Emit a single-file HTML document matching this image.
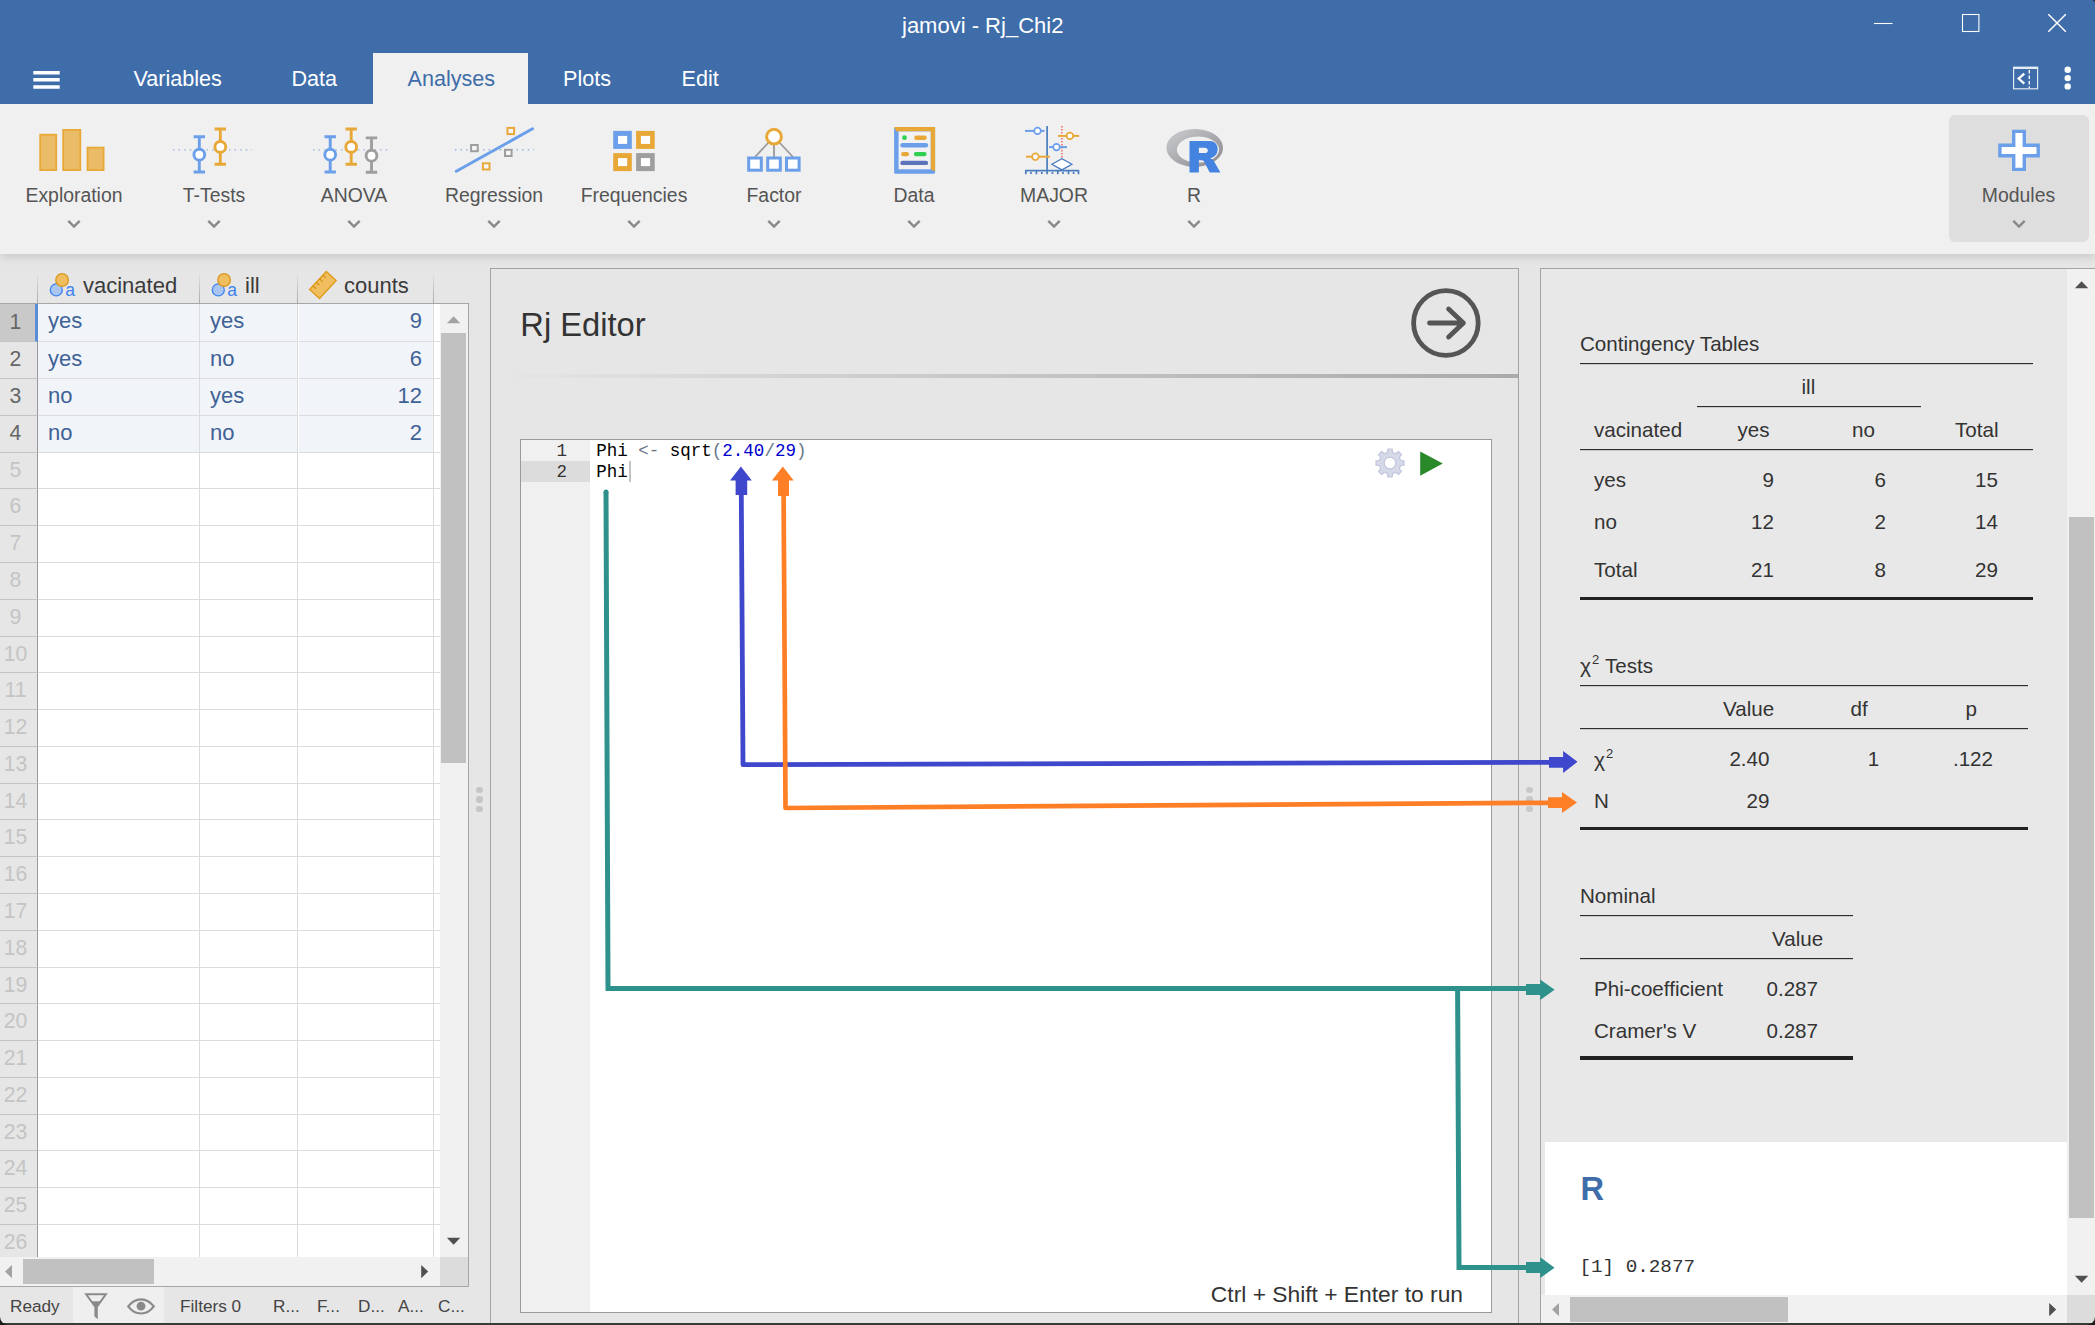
<!DOCTYPE html>
<html>
<head>
<meta charset="utf-8">
<title>jamovi - Rj_Chi2</title>
<style>
*{box-sizing:border-box;margin:0;padding:0}
html,body{width:2095px;height:1325px;overflow:hidden;background:#e6e6e6;font-family:"Liberation Sans",sans-serif;color:#333}
.a{position:absolute}
#app{position:relative;width:2095px;height:1325px;overflow:hidden;background:#e6e6e6}
.t{position:absolute;white-space:nowrap;line-height:1}
/* header */
#hdr{left:0;top:0;width:2095px;height:104px;background:#3e6da9}
#title{left:902px;top:15.08px;font-size:22px;color:#fff}
.tab{position:absolute;color:#fff;font-size:21.6px;white-space:nowrap;line-height:1}
#tab-an{left:373px;top:53px;width:155px;height:51px;background:#f0f0f0}
/* ribbon */
#ribbon{left:0;top:104px;width:2095px;height:150px;background:#f0f0f0;box-shadow:0 3px 9px rgba(0,0,0,.135)}
.lbl{position:absolute;top:185.78px;width:200px;margin-left:-100px;font-size:19.4px;line-height:1;color:#555;white-space:nowrap;text-align:center}
/* data grid */
#grid{left:0;top:268px;width:469px;height:1019px;background:#fff;overflow:hidden}
.rh{position:absolute;left:0;width:38px;padding-right:6px;background:#e6e6e6;border-right:1px solid #999;border-bottom:1px solid #c4c4c4;color:#c4c4c4;font-size:21.2px;text-align:center;white-space:nowrap}
.rh.f{color:#666}
.cell{position:absolute;border-right:1px solid #dcdcdc;border-bottom:1px solid #dcdcdc;font-size:22px;color:#3f6296;white-space:nowrap}
.cell.s{background:#f1f5f9}
.ch{position:absolute;line-height:1;font-size:22px;color:#3a3a3a;white-space:nowrap}
.sb{background:#f1f1f1}
.th{background:#c1c1c1}
/* status */
#status{left:0;top:1287px;width:469px;height:36px;background:#e6e6e6;font-size:17.2px;color:#444}
#status .t{top:11.34px}
/* results */
.r{position:absolute;white-space:nowrap;line-height:1;font-size:20.6px;color:#333;margin-top:.5px}
.rule{position:absolute;height:1px;background:#2e2e2e;box-shadow:0 1px 0 rgba(60,60,60,.18)}
.rule.k{height:3.2px;background:#222;box-shadow:none}
</style>
</head>
<body>
<div id="app">
<!-- ===== data grid ===== -->
<div id="grid" class="a">
<div class="a" style="left:0;top:0;width:469px;height:35px;background:#e6e6e6"></div>
<div class="a" style="left:37px;top:4px;width:1px;height:31px;background:linear-gradient(rgba(160,160,160,0),#a8a8a8)"></div>
<div class="a" style="left:199px;top:4px;width:1px;height:31px;background:linear-gradient(rgba(160,160,160,0),#a8a8a8)"></div>
<div class="a" style="left:297px;top:4px;width:1px;height:31px;background:linear-gradient(rgba(160,160,160,0),#a8a8a8)"></div>
<div class="a" style="left:433px;top:4px;width:1px;height:31px;background:linear-gradient(rgba(160,160,160,0),#a8a8a8)"></div>
<div class="a" style="left:0;top:35px;width:469px;height:1px;background:#a6a6a6"></div>
<svg class="a" style="left:48px;top:3px" width="30" height="28" viewBox="0 0 30 28"><circle cx="8.3" cy="18.9" r="6" fill="#a9c5f1" stroke="#3d83ef" stroke-width="1.3"/><circle cx="14.1" cy="9" r="6.3" fill="#f0bd5f" stroke="#d9981f" stroke-width="1.3"/><text x="17.2" y="24.6" font-family="Liberation Sans" font-size="17.5" fill="#3d83ef">a</text></svg>
<div class="ch" style="left:83px;top:7.28px">vacinated</div>
<svg class="a" style="left:209.8px;top:3px" width="30" height="28" viewBox="0 0 30 28"><circle cx="8.3" cy="18.9" r="6" fill="#a9c5f1" stroke="#3d83ef" stroke-width="1.3"/><circle cx="14.1" cy="9" r="6.3" fill="#f0bd5f" stroke="#d9981f" stroke-width="1.3"/><text x="17.2" y="24.6" font-family="Liberation Sans" font-size="17.5" fill="#3d83ef">a</text></svg>
<div class="ch" style="left:245px;top:7.28px">ill</div>
<svg class="a" style="left:306px;top:0" width="34" height="34" viewBox="0 0 34 34"><g transform="translate(16.9,17) rotate(-47.5)"><rect x="-12.3" y="-6.7" width="24.6" height="13.4" fill="#f0bd5f" stroke="#e09c18" stroke-width="1.4"/><path d="M-7.4 -6.7v4.2M-2.5 -6.7v4.2M2.4 -6.7v4.2M7.3 -6.7v4.2" stroke="#d08c10" stroke-width="1.1" fill="none"/></g></svg>
<div class="ch" style="left:344px;top:7.28px">counts</div>
<div class="rh f" style="top:36px;height:38px;line-height:35px;background:#c9c9c9;border-right:3px solid #5b8dd6;padding-right:4px">1</div><div class="cell s" style="left:38px;top:36px;width:162px;height:38px;line-height:34px;padding-left:10px">yes</div><div class="cell s" style="left:200px;top:36px;width:98px;height:38px;line-height:34px;padding-left:10px">yes</div><div class="cell s" style="left:299px;top:36px;width:135px;height:38px;line-height:34px;text-align:right;padding-right:11px">9</div><div class="a" style="left:434px;top:73px;width:6px;height:1px;background:#dcdcdc"></div>
<div class="rh f" style="top:74px;height:37px;line-height:34px">2</div><div class="cell s" style="left:38px;top:74px;width:162px;height:37px;line-height:33px;padding-left:10px">yes</div><div class="cell s" style="left:200px;top:74px;width:98px;height:37px;line-height:33px;padding-left:10px">no</div><div class="cell s" style="left:299px;top:74px;width:135px;height:37px;line-height:33px;text-align:right;padding-right:11px">6</div><div class="a" style="left:434px;top:110px;width:6px;height:1px;background:#dcdcdc"></div>
<div class="rh f" style="top:111px;height:37px;line-height:34px">3</div><div class="cell s" style="left:38px;top:111px;width:162px;height:37px;line-height:33px;padding-left:10px">no</div><div class="cell s" style="left:200px;top:111px;width:98px;height:37px;line-height:33px;padding-left:10px">yes</div><div class="cell s" style="left:299px;top:111px;width:135px;height:37px;line-height:33px;text-align:right;padding-right:11px">12</div><div class="a" style="left:434px;top:147px;width:6px;height:1px;background:#dcdcdc"></div>
<div class="rh f" style="top:148px;height:37px;line-height:34px">4</div><div class="cell s" style="left:38px;top:148px;width:162px;height:37px;line-height:33px;padding-left:10px">no</div><div class="cell s" style="left:200px;top:148px;width:98px;height:37px;line-height:33px;padding-left:10px">no</div><div class="cell s" style="left:299px;top:148px;width:135px;height:37px;line-height:33px;text-align:right;padding-right:11px">2</div><div class="a" style="left:434px;top:184px;width:6px;height:1px;background:#dcdcdc"></div>
<div class="rh" style="top:185px;height:36px;line-height:33px">5</div><div class="cell" style="left:38px;top:185px;width:162px;height:36px;line-height:32px;padding-left:10px"></div><div class="cell" style="left:200px;top:185px;width:98px;height:36px;line-height:32px;padding-left:10px"></div><div class="cell" style="left:298px;top:185px;width:136px;height:36px;line-height:32px;text-align:right;padding-right:11px"></div><div class="a" style="left:434px;top:220px;width:6px;height:1px;background:#dcdcdc"></div>
<div class="rh" style="top:221px;height:37px;line-height:34px">6</div><div class="cell" style="left:38px;top:221px;width:162px;height:37px;line-height:33px;padding-left:10px"></div><div class="cell" style="left:200px;top:221px;width:98px;height:37px;line-height:33px;padding-left:10px"></div><div class="cell" style="left:298px;top:221px;width:136px;height:37px;line-height:33px;text-align:right;padding-right:11px"></div><div class="a" style="left:434px;top:257px;width:6px;height:1px;background:#dcdcdc"></div>
<div class="rh" style="top:258px;height:37px;line-height:34px">7</div><div class="cell" style="left:38px;top:258px;width:162px;height:37px;line-height:33px;padding-left:10px"></div><div class="cell" style="left:200px;top:258px;width:98px;height:37px;line-height:33px;padding-left:10px"></div><div class="cell" style="left:298px;top:258px;width:136px;height:37px;line-height:33px;text-align:right;padding-right:11px"></div><div class="a" style="left:434px;top:294px;width:6px;height:1px;background:#dcdcdc"></div>
<div class="rh" style="top:295px;height:37px;line-height:34px">8</div><div class="cell" style="left:38px;top:295px;width:162px;height:37px;line-height:33px;padding-left:10px"></div><div class="cell" style="left:200px;top:295px;width:98px;height:37px;line-height:33px;padding-left:10px"></div><div class="cell" style="left:298px;top:295px;width:136px;height:37px;line-height:33px;text-align:right;padding-right:11px"></div><div class="a" style="left:434px;top:331px;width:6px;height:1px;background:#dcdcdc"></div>
<div class="rh" style="top:332px;height:37px;line-height:34px">9</div><div class="cell" style="left:38px;top:332px;width:162px;height:37px;line-height:33px;padding-left:10px"></div><div class="cell" style="left:200px;top:332px;width:98px;height:37px;line-height:33px;padding-left:10px"></div><div class="cell" style="left:298px;top:332px;width:136px;height:37px;line-height:33px;text-align:right;padding-right:11px"></div><div class="a" style="left:434px;top:368px;width:6px;height:1px;background:#dcdcdc"></div>
<div class="rh" style="top:369px;height:36px;line-height:33px">10</div><div class="cell" style="left:38px;top:369px;width:162px;height:36px;line-height:32px;padding-left:10px"></div><div class="cell" style="left:200px;top:369px;width:98px;height:36px;line-height:32px;padding-left:10px"></div><div class="cell" style="left:298px;top:369px;width:136px;height:36px;line-height:32px;text-align:right;padding-right:11px"></div><div class="a" style="left:434px;top:404px;width:6px;height:1px;background:#dcdcdc"></div>
<div class="rh" style="top:405px;height:37px;line-height:34px">11</div><div class="cell" style="left:38px;top:405px;width:162px;height:37px;line-height:33px;padding-left:10px"></div><div class="cell" style="left:200px;top:405px;width:98px;height:37px;line-height:33px;padding-left:10px"></div><div class="cell" style="left:298px;top:405px;width:136px;height:37px;line-height:33px;text-align:right;padding-right:11px"></div><div class="a" style="left:434px;top:441px;width:6px;height:1px;background:#dcdcdc"></div>
<div class="rh" style="top:442px;height:37px;line-height:34px">12</div><div class="cell" style="left:38px;top:442px;width:162px;height:37px;line-height:33px;padding-left:10px"></div><div class="cell" style="left:200px;top:442px;width:98px;height:37px;line-height:33px;padding-left:10px"></div><div class="cell" style="left:298px;top:442px;width:136px;height:37px;line-height:33px;text-align:right;padding-right:11px"></div><div class="a" style="left:434px;top:478px;width:6px;height:1px;background:#dcdcdc"></div>
<div class="rh" style="top:479px;height:37px;line-height:34px">13</div><div class="cell" style="left:38px;top:479px;width:162px;height:37px;line-height:33px;padding-left:10px"></div><div class="cell" style="left:200px;top:479px;width:98px;height:37px;line-height:33px;padding-left:10px"></div><div class="cell" style="left:298px;top:479px;width:136px;height:37px;line-height:33px;text-align:right;padding-right:11px"></div><div class="a" style="left:434px;top:515px;width:6px;height:1px;background:#dcdcdc"></div>
<div class="rh" style="top:516px;height:36px;line-height:33px">14</div><div class="cell" style="left:38px;top:516px;width:162px;height:36px;line-height:32px;padding-left:10px"></div><div class="cell" style="left:200px;top:516px;width:98px;height:36px;line-height:32px;padding-left:10px"></div><div class="cell" style="left:298px;top:516px;width:136px;height:36px;line-height:32px;text-align:right;padding-right:11px"></div><div class="a" style="left:434px;top:551px;width:6px;height:1px;background:#dcdcdc"></div>
<div class="rh" style="top:552px;height:37px;line-height:34px">15</div><div class="cell" style="left:38px;top:552px;width:162px;height:37px;line-height:33px;padding-left:10px"></div><div class="cell" style="left:200px;top:552px;width:98px;height:37px;line-height:33px;padding-left:10px"></div><div class="cell" style="left:298px;top:552px;width:136px;height:37px;line-height:33px;text-align:right;padding-right:11px"></div><div class="a" style="left:434px;top:588px;width:6px;height:1px;background:#dcdcdc"></div>
<div class="rh" style="top:589px;height:37px;line-height:34px">16</div><div class="cell" style="left:38px;top:589px;width:162px;height:37px;line-height:33px;padding-left:10px"></div><div class="cell" style="left:200px;top:589px;width:98px;height:37px;line-height:33px;padding-left:10px"></div><div class="cell" style="left:298px;top:589px;width:136px;height:37px;line-height:33px;text-align:right;padding-right:11px"></div><div class="a" style="left:434px;top:625px;width:6px;height:1px;background:#dcdcdc"></div>
<div class="rh" style="top:626px;height:37px;line-height:34px">17</div><div class="cell" style="left:38px;top:626px;width:162px;height:37px;line-height:33px;padding-left:10px"></div><div class="cell" style="left:200px;top:626px;width:98px;height:37px;line-height:33px;padding-left:10px"></div><div class="cell" style="left:298px;top:626px;width:136px;height:37px;line-height:33px;text-align:right;padding-right:11px"></div><div class="a" style="left:434px;top:662px;width:6px;height:1px;background:#dcdcdc"></div>
<div class="rh" style="top:663px;height:37px;line-height:34px">18</div><div class="cell" style="left:38px;top:663px;width:162px;height:37px;line-height:33px;padding-left:10px"></div><div class="cell" style="left:200px;top:663px;width:98px;height:37px;line-height:33px;padding-left:10px"></div><div class="cell" style="left:298px;top:663px;width:136px;height:37px;line-height:33px;text-align:right;padding-right:11px"></div><div class="a" style="left:434px;top:699px;width:6px;height:1px;background:#dcdcdc"></div>
<div class="rh" style="top:700px;height:36px;line-height:33px">19</div><div class="cell" style="left:38px;top:700px;width:162px;height:36px;line-height:32px;padding-left:10px"></div><div class="cell" style="left:200px;top:700px;width:98px;height:36px;line-height:32px;padding-left:10px"></div><div class="cell" style="left:298px;top:700px;width:136px;height:36px;line-height:32px;text-align:right;padding-right:11px"></div><div class="a" style="left:434px;top:735px;width:6px;height:1px;background:#dcdcdc"></div>
<div class="rh" style="top:736px;height:37px;line-height:34px">20</div><div class="cell" style="left:38px;top:736px;width:162px;height:37px;line-height:33px;padding-left:10px"></div><div class="cell" style="left:200px;top:736px;width:98px;height:37px;line-height:33px;padding-left:10px"></div><div class="cell" style="left:298px;top:736px;width:136px;height:37px;line-height:33px;text-align:right;padding-right:11px"></div><div class="a" style="left:434px;top:772px;width:6px;height:1px;background:#dcdcdc"></div>
<div class="rh" style="top:773px;height:37px;line-height:34px">21</div><div class="cell" style="left:38px;top:773px;width:162px;height:37px;line-height:33px;padding-left:10px"></div><div class="cell" style="left:200px;top:773px;width:98px;height:37px;line-height:33px;padding-left:10px"></div><div class="cell" style="left:298px;top:773px;width:136px;height:37px;line-height:33px;text-align:right;padding-right:11px"></div><div class="a" style="left:434px;top:809px;width:6px;height:1px;background:#dcdcdc"></div>
<div class="rh" style="top:810px;height:37px;line-height:34px">22</div><div class="cell" style="left:38px;top:810px;width:162px;height:37px;line-height:33px;padding-left:10px"></div><div class="cell" style="left:200px;top:810px;width:98px;height:37px;line-height:33px;padding-left:10px"></div><div class="cell" style="left:298px;top:810px;width:136px;height:37px;line-height:33px;text-align:right;padding-right:11px"></div><div class="a" style="left:434px;top:846px;width:6px;height:1px;background:#dcdcdc"></div>
<div class="rh" style="top:847px;height:36px;line-height:33px">23</div><div class="cell" style="left:38px;top:847px;width:162px;height:36px;line-height:32px;padding-left:10px"></div><div class="cell" style="left:200px;top:847px;width:98px;height:36px;line-height:32px;padding-left:10px"></div><div class="cell" style="left:298px;top:847px;width:136px;height:36px;line-height:32px;text-align:right;padding-right:11px"></div><div class="a" style="left:434px;top:882px;width:6px;height:1px;background:#dcdcdc"></div>
<div class="rh" style="top:883px;height:37px;line-height:34px">24</div><div class="cell" style="left:38px;top:883px;width:162px;height:37px;line-height:33px;padding-left:10px"></div><div class="cell" style="left:200px;top:883px;width:98px;height:37px;line-height:33px;padding-left:10px"></div><div class="cell" style="left:298px;top:883px;width:136px;height:37px;line-height:33px;text-align:right;padding-right:11px"></div><div class="a" style="left:434px;top:919px;width:6px;height:1px;background:#dcdcdc"></div>
<div class="rh" style="top:920px;height:37px;line-height:34px">25</div><div class="cell" style="left:38px;top:920px;width:162px;height:37px;line-height:33px;padding-left:10px"></div><div class="cell" style="left:200px;top:920px;width:98px;height:37px;line-height:33px;padding-left:10px"></div><div class="cell" style="left:298px;top:920px;width:136px;height:37px;line-height:33px;text-align:right;padding-right:11px"></div><div class="a" style="left:434px;top:956px;width:6px;height:1px;background:#dcdcdc"></div>
<div class="rh" style="top:957px;height:37px;line-height:34px">26</div><div class="cell" style="left:38px;top:957px;width:162px;height:37px;line-height:33px;padding-left:10px"></div><div class="cell" style="left:200px;top:957px;width:98px;height:37px;line-height:33px;padding-left:10px"></div><div class="cell" style="left:298px;top:957px;width:136px;height:37px;line-height:33px;text-align:right;padding-right:11px"></div><div class="a" style="left:434px;top:993px;width:6px;height:1px;background:#dcdcdc"></div>
<div class="a sb" style="left:440px;top:36px;width:28px;height:953px"></div>
<div class="a" style="left:468px;top:35px;width:1px;height:984px;background:#a6a6a6"></div>
<div class="a th" style="left:441px;top:65px;width:25px;height:430px"></div>
<svg class="a" style="left:446px;top:47px" width="16" height="9" viewBox="0 0 16 9"><path d="M0.9 8.2L7.6 1.2L14.3 8.2z" fill="#a3a3a3"/></svg>
<svg class="a" style="left:446px;top:969px" width="16" height="9" viewBox="0 0 16 9"><path d="M0.9 0.8L7.6 7.8L14.3 0.8z" fill="#505050"/></svg>
<div class="a sb" style="left:0;top:989px;width:440px;height:29px"></div>
<div class="a" style="left:440px;top:989px;width:28px;height:29px;background:#dcdcdc"></div>
<div class="a th" style="left:23px;top:991px;width:131px;height:25px"></div>
<svg class="a" style="left:4px;top:996px" width="9" height="16" viewBox="0 0 9 16"><path d="M8 1L1 7.6L8 14.2z" fill="#a3a3a3"/></svg>
<svg class="a" style="left:420px;top:996px" width="9" height="16" viewBox="0 0 9 16"><path d="M1.2 1L8.2 7.6L1.2 14.2z" fill="#505050"/></svg>
<div class="a" style="left:0;top:1018px;width:469px;height:1px;background:#a6a6a6"></div>
</div>
<!-- ===== status bar ===== -->
<div id="status" class="a">
<div class="a" style="left:73px;top:0;width:91px;height:36px;background:#efefef"></div>
<div class="t" style="left:10px">Ready</div>
<svg class="a" style="left:83px;top:5px" width="27" height="29" viewBox="0 0 27 29"><path d="M1.2 1.2H24.8L14.8 15.2V27.2L11.4 24.6V15.2z" fill="#8a8a8a"/><path d="M5 3.2H21L16.6 9.2H9.4z" fill="#efefef"/></svg>
<svg class="a" style="left:127px;top:11px" width="28" height="17" viewBox="0 0 28 17"><path d="M1.2 8.4C5 3.2 9 1.3 14 1.3S23 3.2 26.8 8.4C23 13.6 19 15.5 14 15.5S5 13.6 1.2 8.4z" fill="none" stroke="#8a8a8a" stroke-width="2.2"/><circle cx="14" cy="8.2" r="4.4" fill="#8a8a8a"/></svg>
<div class="t" style="left:180px">Filters 0</div>
<div class="t" style="left:273px">R...</div>
<div class="t" style="left:317px">F...</div>
<div class="t" style="left:358px">D...</div>
<div class="t" style="left:398px">A...</div>
<div class="t" style="left:438px">C...</div>
</div>
<div class="a" style="left:469px;top:268px;width:21px;height:1057px;background:#e6e6e6"></div>
<div class="a" style="left:476.2px;top:786.7px;width:6.6px;height:6.6px;border-radius:3.3px;background:#c6c6c6"></div><div class="a" style="left:476.2px;top:796.2px;width:6.6px;height:6.6px;border-radius:3.3px;background:#c6c6c6"></div><div class="a" style="left:476.2px;top:805.7px;width:6.6px;height:6.6px;border-radius:3.3px;background:#c6c6c6"></div>
<!-- ===== Rj editor ===== -->
<div class="a" style="left:490px;top:268px;width:1029px;height:1060px;background:#e6e6e6;border:1px solid #a4a4a4"></div>
<div class="t" style="left:520.3px;top:309.35px;font-size:32.7px;color:#333">Rj Editor</div>
<svg class="a" style="left:1408px;top:285px" width="76" height="76" viewBox="0 0 76 76"><circle cx="37.9" cy="38" r="32.3" fill="none" stroke="#555" stroke-width="4.8"/><path d="M21.5 38H55.3M40.6 24L55.4 38L40.6 52" fill="none" stroke="#555" stroke-width="4.8" stroke-linecap="round" stroke-linejoin="round"/></svg>
<div class="a" style="left:500px;top:374px;width:1018px;height:4px;background:linear-gradient(90deg,rgba(170,170,170,0),rgba(170,170,170,.35) 30%,#aaa 100%)"></div>
<div class="a" style="left:520px;top:439px;width:972px;height:874px;background:#fff;border:1px solid #9a9a9a"></div>
<div class="a" style="left:521px;top:440px;width:69px;height:872px;background:#f0f0f0"></div>
<div class="a" style="left:521px;top:461px;width:69px;height:21px;background:#dcdcdc"></div>
<div class="a" style="left:521px;top:441.4px;width:46px;text-align:right;color:#333;font-family:'Liberation Mono',monospace;font-size:17.5px;line-height:21px;white-space:pre">1
2</div>
<div class="a" style="left:596.3px;top:441.4px;color:#000;font-family:'Liberation Mono',monospace;font-size:17.5px;line-height:21px;white-space:pre">Phi <span style="color:#687687">&lt;-</span> sqrt<span style="color:#687687">(</span><span style="color:#0000cd">2.40</span><span style="color:#687687">/</span><span style="color:#0000cd">29</span><span style="color:#687687">)</span>
Phi</div>
<div class="a" style="left:628.5px;top:461px;width:2px;height:21px;background:#c4c4c4"></div>
<svg class="a" style="left:1373.5px;top:447.2px" width="32" height="32" viewBox="0 0 32 32"><path d="M30.0 13.8L30.0 18.2L26.6 18.5L25.3 21.7L27.5 24.3L24.3 27.5L21.7 25.3L18.5 26.6L18.2 30.0L13.8 30.0L13.5 26.6L10.3 25.3L7.7 27.5L4.5 24.3L6.7 21.7L5.4 18.5L2.0 18.2L2.0 13.8L5.4 13.5L6.7 10.3L4.5 7.7L7.7 4.5L10.3 6.7L13.5 5.4L13.8 2.0L18.2 2.0L18.5 5.4L21.7 6.7L24.3 4.5L27.5 7.7L25.3 10.3L26.6 13.5z" fill="#d6d9e8" stroke="#c3c6dd" stroke-width="1.2" stroke-linejoin="round"/><circle cx="16" cy="16" r="5.8" fill="#fff" stroke="#c3c6dd" stroke-width="1.2"/></svg>
<svg class="a" style="left:1419px;top:450px" width="26" height="28" viewBox="0 0 26 28"><path d="M1.2 1.4L23.8 13.5L1.2 25.7z" fill="#2a8a2a"/></svg>
<div class="t" style="left:1100px;width:363px;text-align:right;top:1283.0px;font-size:22.8px;color:#333">Ctrl + Shift + Enter to run</div>
<div class="a" style="left:1526.4px;top:786.7px;width:6.6px;height:6.6px;border-radius:3.3px;background:#c8c8c8"></div><div class="a" style="left:1526.4px;top:796.2px;width:6.6px;height:6.6px;border-radius:3.3px;background:#c8c8c8"></div><div class="a" style="left:1526.4px;top:805.7px;width:6.6px;height:6.6px;border-radius:3.3px;background:#c8c8c8"></div>
<!-- ===== results ===== -->
<div class="a" style="left:1540px;top:268px;width:560px;height:1060px;background:#e8e8e8;border:1px solid #a4a4a4"></div>
<div class="r" style="left:1580px;top:333.4px">Contingency Tables</div>
<div class="rule" style="left:1580px;top:363px;width:453px"></div>
<div class="r" style="left:1801.5px;top:376.4px">ill</div>
<div class="rule" style="left:1697px;top:406px;width:224px"></div>
<div class="r" style="left:1594px;top:419.3px">vacinated</div>
<div class="r" style="left:1737.5px;top:419.3px">yes</div>
<div class="r" style="left:1852px;top:419.3px">no</div>
<div class="r" style="left:1955px;top:419.3px">Total</div>
<div class="rule" style="left:1580px;top:449px;width:453px"></div>
<div class="r" style="left:1594px;top:469.0px">yes</div><div class="r" style="left:1674px;width:100px;text-align:right;top:469.0px">9</div><div class="r" style="left:1786px;width:100px;text-align:right;top:469.0px">6</div><div class="r" style="left:1898px;width:100px;text-align:right;top:469.0px">15</div>
<div class="r" style="left:1594px;top:511.1px">no</div><div class="r" style="left:1674px;width:100px;text-align:right;top:511.1px">12</div><div class="r" style="left:1786px;width:100px;text-align:right;top:511.1px">2</div><div class="r" style="left:1898px;width:100px;text-align:right;top:511.1px">14</div>
<div class="r" style="left:1594px;top:559.9px">Total</div><div class="r" style="left:1674px;width:100px;text-align:right;top:559.9px">21</div><div class="r" style="left:1786px;width:100px;text-align:right;top:559.9px">8</div><div class="r" style="left:1898px;width:100px;text-align:right;top:559.9px">29</div>
<div class="rule k" style="left:1580px;top:596.8px;width:453px"></div>
<div class="r" style="left:1580px;top:654.8px"><span style="font-size:21px">&chi;</span><span style="font-size:13px;position:relative;top:-9px;margin-left:1px">2</span> Tests</div>
<div class="rule" style="left:1580px;top:685px;width:448px"></div>
<div class="r" style="left:1723px;top:698.5px">Value</div>
<div class="r" style="left:1850.5px;top:698.5px">df</div>
<div class="r" style="left:1965.5px;top:698.5px">p</div>
<div class="rule" style="left:1580px;top:728px;width:448px"></div>
<div class="r" style="left:1594px;top:748.6px"><span style="font-size:21px">&chi;</span><span style="font-size:13px;position:relative;top:-9px;margin-left:1px">2</span></div><div class="r" style="left:1669.5px;width:100px;text-align:right;top:748.6px">2.40</div><div class="r" style="left:1779.3px;width:100px;text-align:right;top:748.6px">1</div><div class="r" style="left:1893px;width:100px;text-align:right;top:748.6px">.122</div>
<div class="r" style="left:1594px;top:790.9px">N</div><div class="r" style="left:1669.5px;width:100px;text-align:right;top:790.9px">29</div>
<div class="rule k" style="left:1580px;top:827px;width:448px"></div>
<div class="r" style="left:1580px;top:885.9px">Nominal</div>
<div class="rule" style="left:1580px;top:915px;width:273px"></div>
<div class="r" style="left:1772px;top:928.4px">Value</div>
<div class="rule" style="left:1580px;top:958px;width:273px"></div>
<div class="r" style="left:1594px;top:978.4px">Phi-coefficient</div><div class="r" style="left:1718px;width:100px;text-align:right;top:978.4px">0.287</div>
<div class="r" style="left:1594px;top:1020.5px">Cramer's V</div><div class="r" style="left:1718px;width:100px;text-align:right;top:1020.5px">0.287</div>
<div class="rule k" style="left:1580px;top:1056.4px;width:273px"></div>
<div class="a" style="left:1545px;top:1142px;width:522px;height:153px;background:#fff"></div>
<div class="t" style="left:1580.6px;top:1173.2px;font-size:32.6px;font-weight:bold;color:#3e6da9">R</div>
<div class="t" style="left:1579.5px;top:1258.36px;font-family:'Liberation Mono',monospace;font-size:19.25px;color:#333">[1] 0.2877</div>
<div class="a sb" style="left:2067px;top:269px;width:28px;height:1026px"></div>
<div class="a th" style="left:2069px;top:517px;width:25px;height:700.5px"></div>
<svg class="a" style="left:2074px;top:279.8px" width="16" height="9" viewBox="0 0 16 9"><path d="M0.9 8.2L7.6 1.2L14.3 8.2z" fill="#505050"/></svg>
<svg class="a" style="left:2074px;top:1275px" width="16" height="9" viewBox="0 0 16 9"><path d="M0.9 0.8L7.6 7.8L14.3 0.8z" fill="#505050"/></svg>
<div class="a sb" style="left:1541px;top:1295px;width:526px;height:28px"></div>
<div class="a" style="left:2067px;top:1295px;width:28px;height:28px;background:#dcdcdc"></div>
<div class="a th" style="left:1570px;top:1297px;width:218px;height:25px"></div>
<svg class="a" style="left:1551px;top:1301.9px" width="9" height="16" viewBox="0 0 9 16"><path d="M8 1L1 7.6L8 14.2z" fill="#a3a3a3"/></svg>
<svg class="a" style="left:2047.7px;top:1301.9px" width="9" height="16" viewBox="0 0 9 16"><path d="M1.2 1L8.2 7.6L1.2 14.2z" fill="#505050"/></svg>
<!-- ===== annotation arrows ===== -->
<svg class="a" style="left:0;top:0" width="2095" height="1325" viewBox="0 0 2095 1325">
<path d="M741.3 494L743 764.7L1550 762.3" fill="none" stroke="#3f48cc" stroke-width="4.8" stroke-linejoin="round"/>
<path d="M740.9 466.4L751.8 480.5H747.2V495H735.6V480.5H730z" fill="#3f48cc"/>
<path d="M1577.5 761.8L1563.1 751V757H1549V767.8H1563.1V773z" fill="#3f48cc"/>
<path d="M783.6 495L785.5 808L1549 802.8" fill="none" stroke="#ff7f27" stroke-width="4.7" stroke-linejoin="round"/>
<path d="M782.8 466.4L793.7 480.5H789V496H778V480.5H771.9z" fill="#ff7f27"/>
<path d="M1577 802.5L1562 792V797.2H1548V807.9H1562V813z" fill="#ff7f27"/>
<path d="M606 492L608 988.5L1527 988.5M1457.6 988.5L1459 1267.5L1527 1267.5" fill="none" stroke="#2f918c" stroke-width="5" stroke-linejoin="miter"/>
<circle cx="606" cy="492" r="2.5" fill="#2f918c"/>
<path d="M1554.6 989.8L1540.2 979.4V984H1526V995H1540.2V1000z" fill="#2f918c"/>
<path d="M1554.6 1267.7L1540.2 1257.3V1262H1526V1273H1540.2V1278z" fill="#2f918c"/>
</svg>
<!-- ===== ribbon ===== -->
<div id="ribbon" class="a"></div>
<div class="a" style="left:1949px;top:115px;width:140px;height:127px;border-radius:6px;background:#dedede"></div>
<div class="lbl" style="left:74px">Exploration</div><svg class="a" style="left:66px;top:218.3px" width="16" height="12" viewBox="0 0 16 12"><path d="M2.3 2.8L8 8.5L13.7 2.8" fill="none" stroke="#888" stroke-width="2.4"/></svg>
<div class="lbl" style="left:214px">T-Tests</div><svg class="a" style="left:206px;top:218.3px" width="16" height="12" viewBox="0 0 16 12"><path d="M2.3 2.8L8 8.5L13.7 2.8" fill="none" stroke="#888" stroke-width="2.4"/></svg>
<div class="lbl" style="left:354px">ANOVA</div><svg class="a" style="left:346px;top:218.3px" width="16" height="12" viewBox="0 0 16 12"><path d="M2.3 2.8L8 8.5L13.7 2.8" fill="none" stroke="#888" stroke-width="2.4"/></svg>
<div class="lbl" style="left:494px">Regression</div><svg class="a" style="left:486px;top:218.3px" width="16" height="12" viewBox="0 0 16 12"><path d="M2.3 2.8L8 8.5L13.7 2.8" fill="none" stroke="#888" stroke-width="2.4"/></svg>
<div class="lbl" style="left:634px">Frequencies</div><svg class="a" style="left:626px;top:218.3px" width="16" height="12" viewBox="0 0 16 12"><path d="M2.3 2.8L8 8.5L13.7 2.8" fill="none" stroke="#888" stroke-width="2.4"/></svg>
<div class="lbl" style="left:774px">Factor</div><svg class="a" style="left:766px;top:218.3px" width="16" height="12" viewBox="0 0 16 12"><path d="M2.3 2.8L8 8.5L13.7 2.8" fill="none" stroke="#888" stroke-width="2.4"/></svg>
<div class="lbl" style="left:914px">Data</div><svg class="a" style="left:906px;top:218.3px" width="16" height="12" viewBox="0 0 16 12"><path d="M2.3 2.8L8 8.5L13.7 2.8" fill="none" stroke="#888" stroke-width="2.4"/></svg>
<div class="lbl" style="left:1054px">MAJOR</div><svg class="a" style="left:1046px;top:218.3px" width="16" height="12" viewBox="0 0 16 12"><path d="M2.3 2.8L8 8.5L13.7 2.8" fill="none" stroke="#888" stroke-width="2.4"/></svg>
<div class="lbl" style="left:1194px">R</div><svg class="a" style="left:1186px;top:218.3px" width="16" height="12" viewBox="0 0 16 12"><path d="M2.3 2.8L8 8.5L13.7 2.8" fill="none" stroke="#888" stroke-width="2.4"/></svg>
<div class="lbl" style="left:2018.5px">Modules</div><svg class="a" style="left:2010.5px;top:218.3px" width="16" height="12" viewBox="0 0 16 12"><path d="M2.3 2.8L8 8.5L13.7 2.8" fill="none" stroke="#888" stroke-width="2.4"/></svg>
<svg class="a" style="left:0;top:104px" width="2095" height="150" viewBox="0 104 2095 150">
<g fill="#ebbc68" stroke="#e8a838" stroke-width="1.8"><rect x="40.2" y="134.7" width="16" height="35.4"/><rect x="63.2" y="129.9" width="17.1" height="40.2"/><rect x="87.5" y="147.6" width="16.1" height="22.5"/></g>
<path d="M173 149.9H252" stroke="#8fb0e0" stroke-width="1.4" stroke-dasharray="1.4 4.2" fill="none"/>
<g stroke="#6b9fea" stroke-width="2.9" fill="none"><path d="M193.60000000000002 136.70000000000002H205.0M193.60000000000002 172.0H205.0M199.3 135.3V173.4"/><circle cx="199.3" cy="154.7" r="5.4" fill="#fff"/></g><g stroke="#e8a838" stroke-width="2.9" fill="none"><path d="M214.60000000000002 129.0H226.0M214.60000000000002 164.29999999999998H226.0M220.3 127.6V165.7"/><circle cx="220.3" cy="146.9" r="5.4" fill="#fff"/></g>
<path d="M313 149.9H391" stroke="#8fb0e0" stroke-width="1.4" stroke-dasharray="1.4 4.2" fill="none"/>
<g stroke="#6b9fea" stroke-width="2.9" fill="none"><path d="M324.5 136.70000000000002H335.9M324.5 172.0H335.9M330.2 135.3V173.4"/><circle cx="330.2" cy="154.7" r="5.4" fill="#fff"/></g><g stroke="#e8a838" stroke-width="2.9" fill="none"><path d="M345.5 129.0H356.9M345.5 164.29999999999998H356.9M351.2 127.6V165.7"/><circle cx="351.2" cy="146.9" r="5.4" fill="#fff"/></g><g stroke="#9e9e9e" stroke-width="2.9" fill="none"><path d="M365.8 137.9H377.2M365.8 172.29999999999998H377.2M371.5 136.5V173.7"/><circle cx="371.5" cy="155.7" r="5.4" fill="#fff"/></g>
<path d="M455 149.7H534" stroke="#8fb0e0" stroke-width="1.4" stroke-dasharray="1.4 4.2" fill="none"/>
<path d="M456.3 171.3L532.5 128.8" stroke="#6b9fea" stroke-width="3" stroke-linecap="round"/>
<rect x="507.5" y="127.9" width="6.6" height="6.2" fill="#f6f6f6" stroke="#e8a838" stroke-width="2"/><rect x="471.09999999999997" y="145.0" width="6.6" height="6.2" fill="#f6f6f6" stroke="#9e9e9e" stroke-width="2"/><rect x="505.0" y="149.8" width="6.6" height="6.2" fill="#f6f6f6" stroke="#9e9e9e" stroke-width="2"/><rect x="482.9" y="163.3" width="6.6" height="6.2" fill="#f6f6f6" stroke="#e8a838" stroke-width="2"/>
<rect x="613.2" y="130.9" width="18.6" height="18" fill="#6b9fea"/><rect x="618.0" y="135.9" width="9.2" height="8" fill="#fff"/><rect x="636.1" y="130.9" width="18.6" height="18" fill="#e8a838"/><rect x="640.9" y="135.9" width="9.2" height="8" fill="#fff"/><rect x="613.2" y="153.1" width="18.6" height="18" fill="#e8a838"/><rect x="618.0" y="158.1" width="9.2" height="8" fill="#fff"/><rect x="636.1" y="153.1" width="18.6" height="18" fill="#9e9e9e"/><rect x="640.9" y="158.1" width="9.2" height="8" fill="#fff"/>
<path d="M774 138V158M769 142L755 157M779 142L793 157" stroke="#9a9a9a" stroke-width="1.8" fill="none"/>
<circle cx="774" cy="136.7" r="7.4" fill="#fff" stroke="#e8a838" stroke-width="3"/>
<rect x="748.7" y="158" width="12.6" height="12.2" fill="#fff" stroke="#6b9fea" stroke-width="3"/><rect x="767.7" y="158" width="12.6" height="12.2" fill="#fff" stroke="#6b9fea" stroke-width="3"/><rect x="786.5" y="158" width="12.6" height="12.2" fill="#fff" stroke="#6b9fea" stroke-width="3"/>
<rect x="894.1" y="127" width="41" height="46.8" fill="#6b9fea" rx="1.5"/><path d="M894.1 127H935.1V171.5L930.6 169.3V131.5H896.5z" fill="#e8a838"/><rect x="898.6" y="131.5" width="32" height="37.8" fill="#f2f2f2"/>
<circle cx="904.5" cy="137.7" r="2.4" fill="#2fd04f"/><path d="M916.4 137.7H924.6" stroke="#e8a838" stroke-width="4.4" stroke-linecap="round"/><path d="M902.5 145.3H926" stroke="#6b9fea" stroke-width="4.4" stroke-linecap="round"/><path d="M903.3 154.1H906.9" stroke="#e8a838" stroke-width="4.4" stroke-linecap="round"/><path d="M916 154.1H924.4" stroke="#2fd04f" stroke-width="4.4" stroke-linecap="round"/><path d="M902.5 162.9H926" stroke="#5c74ba" stroke-width="4.4" stroke-linecap="round"/>
<path d="M1047.1 126V174M1025 170.7H1079.2M1025.8 170.7V174.3M1036.4 170.7V174.3M1047.1 170.7V174.3M1057.8 170.7V174.3M1068.5 170.7V174.3M1078.5 170.7V174.3M1031 172V174M1041.8 172V174M1052.4 172V174M1063 172V174M1073.6 172V174" stroke="#4a7cc0" stroke-width="1.7" fill="none"/>
<path d="M1061.9 126V159" stroke="#f06a6a" stroke-width="1.5" stroke-dasharray="1.6 1.4" fill="none"/>
<path d="M1025 130.9H1044.5" stroke="#6b9fea" stroke-width="2" fill="none"/><circle cx="1037.5" cy="130.9" r="3.3" fill="#fff" stroke="#6b9fea" stroke-width="1.7"/><path d="M1058 135.9H1079.2" stroke="#e8a838" stroke-width="2" fill="none"/><circle cx="1069.9" cy="135.9" r="3.3" fill="#fff" stroke="#e8a838" stroke-width="1.7"/><path d="M1049 147.1H1067" stroke="#6b9fea" stroke-width="2" fill="none"/><circle cx="1056.5" cy="147.1" r="3.3" fill="#fff" stroke="#6b9fea" stroke-width="1.7"/><path d="M1026 156.7H1050" stroke="#e8a838" stroke-width="2" fill="none"/><circle cx="1035.4" cy="156.7" r="3.3" fill="#fff" stroke="#e8a838" stroke-width="1.7"/>
<path d="M1051.9 164.3L1061.9 158.7L1071.9 164.3L1061.9 169.9z" fill="#fff" stroke="#4a7cc0" stroke-width="1.3"/>
<defs><linearGradient id="rg" x1="0" y1="0" x2="1" y2="1"><stop offset="0" stop-color="#cdced2"/><stop offset="1" stop-color="#87878c"/></linearGradient></defs>
<path fill-rule="evenodd" fill="url(#rg)" d="M1194.7 129a28.3 18.9 0 1 0 0.01 0zM1198 136.6a21.1 13.1 0 1 1 -0.01 0z"/>
<path fill-rule="evenodd" fill="#4583e1" d="M1189.5 140.9H1209.5C1214.5 140.9 1217.7 144.3 1217.7 149C1217.7 153.6 1215 157.2 1210 158.3C1212 158.8 1213.3 160 1214.3 161.8L1220.4 172.5H1209.7L1204.6 162.5C1203.9 161 1203.3 160.2 1201.8 160.2H1198.9V172.5H1189.5zM1198.9 147.8H1204.6C1206.6 147.8 1207.8 148.8 1207.8 150.4C1207.8 152.1 1206.6 153.1 1204.6 153.1H1198.9z"/>
<path d="M2013.7 131.4H2024.3V145.2H2038.2V155.8H2024.3V169.4H2013.7V155.8H1999.9V145.2H2013.7z" fill="#fff" stroke="#6b9fea" stroke-width="3.4"/>
</svg>
<!-- ===== header ===== -->
<div id="hdr" class="a"></div>
<div id="title" class="t">jamovi - Rj_Chi2</div>
<div id="tab-an" class="a"></div>
<svg class="a" style="left:33px;top:70px" width="28" height="20" viewBox="33 70 28 20"><path d="M33.3 71.05h26.4v3.4h-26.4zM33.3 78.1h26.4v3.4h-26.4zM33.3 85.15h26.4v3.5h-26.4z" fill="#fff"/></svg>
<div class="tab" style="left:133.5px;top:67.5px;color:#fff">Variables</div><div class="tab" style="left:291.5px;top:67.5px;color:#fff">Data</div><div class="tab" style="left:407.5px;top:67.5px;color:#3e6da9">Analyses</div><div class="tab" style="left:563px;top:67.5px;color:#fff">Plots</div><div class="tab" style="left:681.5px;top:67.5px;color:#fff">Edit</div>
<svg class="a" style="left:1860px;top:0" width="235" height="104" viewBox="1860 0 235 104">
<path d="M1874 23.5H1892.5" stroke="#fff" stroke-width="1.1"/><rect x="1962.5" y="14.5" width="16.4" height="17" fill="none" stroke="#fff" stroke-width="1.1"/><path d="M2048.3 14.2L2065.8 31.8M2065.8 14.2L2048.3 31.8" stroke="#fff" stroke-width="1.5"/>
<rect x="2013.6" y="68.2" width="24" height="20.6" fill="none" stroke="#dfe7f2" stroke-width="1.2"/><path d="M2013 67.8H2038.2" stroke="#e6ecf5" stroke-width="2.4"/><path d="M2029.3 70V88" stroke="#fff" stroke-width="1.4" stroke-dasharray="3.5 2"/><path d="M2024.3 73.6L2018.6 78.6L2024.3 83.6" fill="none" stroke="#fff" stroke-width="2.2"/>
<circle cx="2067.7" cy="69.8" r="3.2" fill="#fff"/><circle cx="2067.7" cy="78.1" r="3.2" fill="#fff"/><circle cx="2067.7" cy="86.4" r="3.2" fill="#fff"/>
</svg>
<div class="a" style="left:0;top:1322.5px;width:2095px;height:3px;background:#3a3a3a"></div>
<svg class="a" style="left:0;top:0" width="2095" height="1325" viewBox="0 0 2095 1325"><path d="M2095 0V3.2A3.2 3.2 0 0 0 2091.8 0zM0 1325V1316.5A8.5 8.5 0 0 0 8.5 1325zM2095 1325H2086.5A8.5 8.5 0 0 0 2095 1316.5z" fill="#1c1c1c"/></svg>
</div>
</body>
</html>
